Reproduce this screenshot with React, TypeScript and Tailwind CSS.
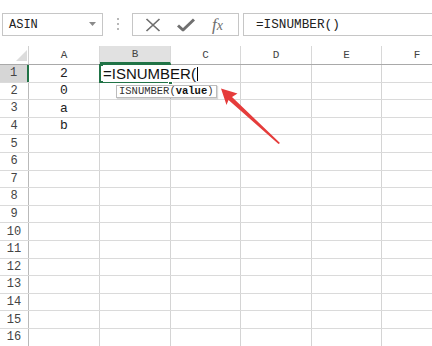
import type { ReactNode } from 'react'

const COLS = [
  { key: 'A', w: 'w-[71px]' },
  { key: 'B', w: 'w-[71px]' },
  { key: 'C', w: 'w-[70px]' },
  { key: 'D', w: 'w-[71px]' },
  { key: 'E', w: 'w-[70px]' },
  { key: 'F', w: 'w-[71px]' },
]

const VALUES: Record<number, string> = { 1: '2', 2: '0', 3: 'a', 4: 'b' }
const ROWS = Array.from({ length: 16 }, (_, i) => i + 1)

const mono = "font-['Liberation_Mono','DejaVu_Sans_Mono',monospace]"

const Toolbar = () => (
  <div className="flex h-[46px] items-start pt-[13px] bg-white">
    <div className="ml-[2px] flex h-[23px] w-[101px] items-center justify-between border border-[#c6c6c6] pl-[6px] pr-[6px]">
      <span className={`${mono} text-[12px] text-[#222]`}>ASIN</span>
      <svg width="7" height="5" viewBox="0 0 7 5">
        <path d="M0 0h7L3.5 4z" fill="#8a8a8a" />
      </svg>
    </div>
    <div className="flex w-[29px] justify-center pt-[5px]">
      <div className="flex flex-col gap-[3px]">
        <span className="h-[2px] w-[2px] bg-[#b8b8b8]" />
        <span className="h-[2px] w-[2px] bg-[#b8b8b8]" />
        <span className="h-[2px] w-[2px] bg-[#b8b8b8]" />
      </div>
    </div>
    <div className="flex h-[23px] w-[107px] items-center border border-[#c6c6c6] pl-[12px]">
      <svg width="16" height="14" viewBox="0 0 16 14" className="mr-[16px]">
        <path d="M1.5 1l13 12M14.5 1l-13 12" stroke="#6e6e6e" strokeWidth="1.7" fill="none" />
      </svg>
      <svg width="18" height="14" viewBox="0 0 18 14" className="mr-[17px]">
        <path d="M1 7.5l5 4.5L17 1.5" stroke="#707070" strokeWidth="3" fill="none" strokeLinejoin="round" />
      </svg>
      <span className="font-['Liberation_Serif',serif] text-[17px] italic leading-none text-[#6e6e6e]">
        f<span className="text-[14px]">x</span>
      </span>
    </div>
    <div className="ml-[4px] flex h-[23px] flex-1 items-center border border-r-0 border-[#c6c6c6] pl-[12px]">
      <span className={`${mono} text-[12.7px] text-[#222]`}>=ISNUMBER()</span>
    </div>
  </div>
)

const HeaderRow = () => (
  <div className="flex h-[19px] border-b border-[#a9a9a9]">
    <div className="relative w-[29px] shrink-0 border-r border-[#d0d0d0]">
      <svg width="11" height="11" viewBox="0 0 11 11" className="absolute right-[1px] bottom-[3px]">
        <path d="M11 0v11H0z" fill="#dcdcdc" />
      </svg>
    </div>
    {COLS.map(c => (
      <div
        key={c.key}
        className={`${c.w} shrink-0 flex items-center justify-center border-r border-[#d8d8d8] ${
          c.key === 'B' ? 'bg-[#e1e1e1] border-b-2 border-b-[#217346]' : ''
        }`}
      >
        <span className={`${mono} text-[11px] text-[#444]`}>{c.key}</span>
      </div>
    ))}
  </div>
)

const EditingCell = ({ children }: { children: ReactNode }) => (
  <div className="absolute inset-0 z-10">
    <div className="pointer-events-none absolute -left-px -top-px h-[19px] w-[72px] border-2 border-[#217346]" />
    <div className="absolute -bottom-[3px] left-[68px] h-[5px] w-[5px] border border-white bg-[#217346]" />
    <div className="absolute left-[3px] top-0 flex h-[17px] items-center whitespace-nowrap bg-white pr-[1px] font-['Liberation_Sans',Arial,sans-serif] text-[15px] leading-none text-[#111]">
      {children}
      <span className="ml-[1px] h-[14px] w-px bg-black" />
    </div>
    <div className="absolute left-[16px] top-[20px] flex h-[13px] items-center whitespace-nowrap border border-[#bcbcbc] bg-white px-[2px] shadow-[1px_1px_1px_rgba(0,0,0,0.15)]">
      <span className={`${mono} text-[10.5px] leading-none text-[#333]`}>
        ISNUMBER(<b className="text-[#111]">value</b>)
      </span>
    </div>
  </div>
)

const SheetRow = ({ n }: { n: number }) => (
  <div className="flex h-[17.6px] border-b border-[#dadada]">
    <div
      className={`w-[29px] shrink-0 flex items-center justify-center ${
        n === 1 ? 'bg-[#d6d6d6] border-r-2 border-[#217346]' : 'border-r border-[#b9b9b9]'
      }`}
    >
      <span className={`${mono} text-[12px] text-[#444]`}>{n}</span>
    </div>
    {COLS.map(c => (
      <div key={c.key} className={`${c.w} relative shrink-0 flex items-center justify-center border-r border-[#d4d4d4]`}>
        {c.key === 'A' && VALUES[n] && (
          <span className={`${mono} text-[13px] text-[#222]`}>{VALUES[n]}</span>
        )}
        {c.key === 'B' && n === 1 && <EditingCell>=ISNUMBER(</EditingCell>}
      </div>
    ))}
  </div>
)

export default function App() {
  return (
    <div className="relative h-[346px] w-[432px] overflow-hidden bg-white">
      <Toolbar />
      <HeaderRow />
      {ROWS.map(n => (
        <SheetRow key={n} n={n} />
      ))}
      <svg className="pointer-events-none absolute left-0 top-0 z-20" width="432" height="346">
        <path d="M221 88.5L237.5 93.5L232 97L280 143L278.5 144L228.5 100L226.5 105Z" fill="#e53c3b" />
      </svg>
    </div>
  )
}
